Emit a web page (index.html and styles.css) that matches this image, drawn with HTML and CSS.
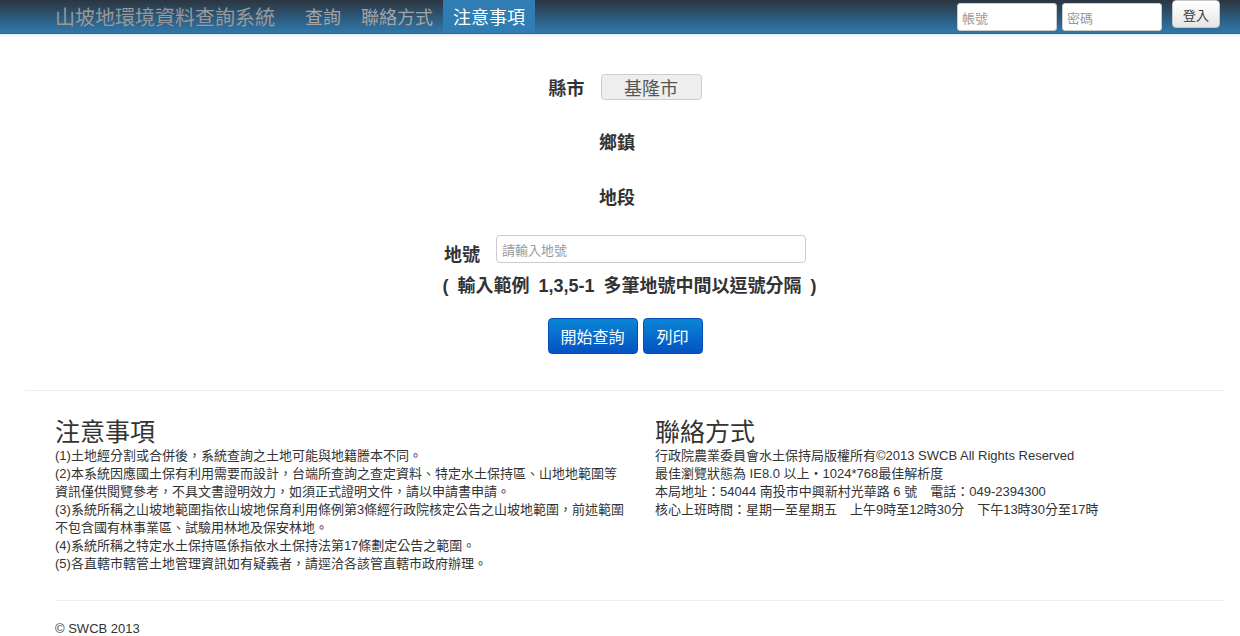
FILE: index.html
```html
<!DOCTYPE html>
<html lang="zh-Hant">
<head>
<meta charset="utf-8">
<title>山坡地環境資料查詢系統</title>
<link rel="stylesheet" href="styles.css">
</head>
<body>
<header class="navbar">
  <div class="nav-left">
    <span class="brand">山坡地環境資料查詢系統</span>
    <nav class="nav">
      <a class="nav-item">查詢</a>
      <a class="nav-item">聯絡方式</a>
      <a class="nav-item active">注意事項</a>
    </nav>
  </div>
  <form class="login">
    <input class="login-input" type="text" placeholder="帳號">
    <input class="login-input" type="password" placeholder="密碼">
    <button class="login-btn" type="button">登入</button>
  </form>
</header>

<main class="query">
  <div class="row row-city">
    <span class="label">縣市</span>
    <span class="select-box">基隆市</span>
  </div>
  <div class="row row-town">
    <span class="label">鄉鎮</span>
  </div>
  <div class="row row-section">
    <span class="label">地段</span>
  </div>
  <div class="row row-lot">
    <span class="label label-low">地號</span>
    <input class="lot-input" type="text" placeholder="請輸入地號">
  </div>
  <div class="hint">( 輸入範例 1,3,5-1 多筆地號中間以逗號分隔 )</div>
  <div class="actions">
    <button class="btn-primary btn-wide" type="button">開始查詢</button>
    <button class="btn-primary btn-narrow" type="button">列印</button>
  </div>
</main>

<hr class="divider">

<section class="info">
  <div class="col">
    <h2 class="col-title">注意事項</h2>
    <p class="col-text">(1)土地經分割或合併後，系統查詢之土地可能與地籍謄本不同。<br>(2)本系統因應國土保有利用需要而設計，台端所查詢之查定資料、特定水土保持區、山地地範圍等<br>資訊僅供閱覽參考，不具文書證明效力，如須正式證明文件，請以申請書申請。<br>(3)系統所稱之山坡地範圍指依山坡地保育利用條例第3條經行政院核定公告之山坡地範圍，前述範圍<br>不包含國有林事業區、試驗用林地及保安林地。<br>(4)系統所稱之特定水土保持區係指依水土保持法第17條劃定公告之範圍。<br>(5)各直轄市轄管土地管理資訊如有疑義者，請逕洽各該管直轄市政府辦理。</p>
  </div>
  <div class="col">
    <h2 class="col-title">聯絡方式</h2>
    <p class="col-text">行政院農業委員會水土保持局版權所有©2013 SWCB All Rights Reserved<br>最佳瀏覽狀態為 IE8.0 以上・1024*768最佳解析度<br>本局地址：54044 南投市中興新村光華路 6 號　電話：049-2394300<br>核心上班時間：星期一至星期五　上午9時至12時30分　下午13時30分至17時</p>
  </div>
</section>

<footer class="footer">
  <hr class="footer-rule">
  <p class="copy">© SWCB 2013</p>
</footer>
</body>
</html>
```

FILE: styles.css
```css
* { box-sizing: border-box; }

body {
  margin: 0;
  background: #fff;
  color: #333;
  font-family: "Liberation Sans", "Noto Sans CJK TC", sans-serif;
  font-size: 12px;
}

.navbar {
  height: 34px;
  background: linear-gradient(#2b3540, #2f79ad);
  border-bottom: 1px solid #2a6a98;
  box-shadow: 0 1px 3px rgba(0,0,0,0.12);
  display: flex;
  justify-content: space-between;
  align-items: flex-start;
  padding: 0 20px 0 55px;
}

.nav-left {
  display: flex;
  align-items: center;
  height: 33px;
}

.brand {
  font-family: "Noto Sans CJK TC", sans-serif;
  font-size: 20px;
  color: #999;
  line-height: 33px;
  margin-right: 20px;
}

.nav {
  display: flex;
  height: 33px;
}

.nav-item {
  font-family: "Noto Sans CJK TC", sans-serif;
  font-size: 18px;
  color: #a5a5a5;
  line-height: 33px;
  padding: 0 10px;
}

.nav-item.active {
  background: #2f7db3;
  color: #fff;
}

.login {
  display: flex;
  align-items: flex-start;
  margin: 0;
}

.login-input {
  width: 100px;
  height: 28px;
  margin-top: 3px;
  margin-right: 5px;
  border: 1px solid #ccc;
  border-radius: 3px;
  padding: 3px 4px;
  font-family: "Noto Sans CJK TC", sans-serif;
  font-size: 13px;
  color: #555;
  background: #fff;
}

.login-input::placeholder { color: #999; }

.login-btn {
  margin-left: 5px;
  width: 48px;
  height: 28px;
  border: 1px solid #c5c5c5;
  border-radius: 4px;
  background: linear-gradient(#ffffff, #e6e6e6);
  font-family: "Noto Sans CJK TC", sans-serif;
  font-size: 13px;
  color: #333;
  padding: 0;
}

.query {
  display: flex;
  flex-direction: column;
  align-items: center;
  padding-top: 38px;
}

.row {
  display: flex;
  align-items: center;
  height: 30px;
}

.row-city { margin-left: 10px; }
.row-town { margin-top: 24px; padding-right: 6px; }
.row-section { margin-top: 25px; padding-right: 6px; }
.row-lot { margin-top: 23px; margin-left: 10px; }

.label {
  font-family: "Noto Sans CJK TC", sans-serif;
  font-weight: bold;
  font-size: 18px;
  color: #333;
  line-height: 30px;
}

.label-low { padding-top: 8px; }

.select-box {
  margin-left: 16px;
  width: 101px;
  height: 26px;
  background: #eee;
  border: 1px solid #ccc;
  border-radius: 4px;
  font-family: "Noto Sans CJK TC", sans-serif;
  font-size: 18px;
  color: #555;
  line-height: 24px;
  text-align: center;
}

.lot-input {
  margin-left: 16px;
  width: 310px;
  height: 28px;
  border: 1px solid #ccc;
  border-radius: 4px;
  padding: 3px 5px;
  font-family: "Noto Sans CJK TC", sans-serif;
  font-size: 13px;
  color: #555;
}

.lot-input::placeholder { color: #999; }

.hint {
  margin-top: 10px;
  margin-left: 19px;
  height: 24px;
  line-height: 24px;
  font-family: "Liberation Sans", "Noto Sans CJK TC", sans-serif;
  font-weight: bold;
  font-size: 18px;
  word-spacing: 4px;
  color: #333;
}

.actions {
  display: flex;
  gap: 5px;
  margin-top: 20px;
  margin-left: 10px;
}

.btn-primary {
  height: 36px;
  border: 1px solid #0450b4;
  border-radius: 4px;
  background: linear-gradient(#0b86d6, #0452c2);
  color: #fff;
  font-family: "Noto Sans CJK TC", sans-serif;
  font-size: 16px;
  padding: 0;
}

.btn-wide { width: 90px; }
.btn-narrow { width: 60px; }

.divider {
  margin: 36px 16px 0 25px;
  border: 0;
  border-top: 1px solid #eee;
}

.info {
  display: flex;
  gap: 30px;
  padding: 0 15px 0 55px;
  margin-top: 24px;
}

.col {
  width: 570px;
}

.col-title {
  margin: 0;
  font-family: "Noto Sans CJK TC", sans-serif;
  font-weight: normal;
  font-size: 25px;
  line-height: 30px;
  color: #333;
}

.col-text {
  margin: 2px 0 0 0;
  font-family: "Liberation Sans", "Noto Sans CJK TC", sans-serif;
  font-size: 13px;
  line-height: 18px;
  color: #333;
  white-space: nowrap;
}

.footer {
  padding: 0 16px 0 55px;
}

.footer-rule {
  margin: 27px 0 0 0;
  border: 0;
  border-top: 1px solid #eee;
}

.copy {
  margin: 19px 0 0 0;
  font-size: 13px;
  line-height: 18px;
  color: #333;
}
```
